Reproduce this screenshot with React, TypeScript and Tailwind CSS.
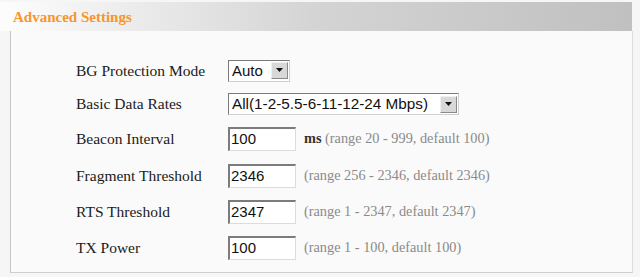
import React from "react";

const serif = { fontFamily: '"Liberation Serif", "Times New Roman", serif' };
const sans = { fontFamily: '"Liberation Sans", Arial, sans-serif' };

function Arrow() {
  return (
    <div className="flex h-[17px] w-[17px] items-center justify-center border border-t-[#f0f0f0] border-l-[#f0f0f0] border-r-[#8a8a8a] border-b-[#8a8a8a] bg-[#d8d8d8]">
      <svg width="8" height="5" viewBox="0 0 8 5">
        <path d="M0 0 H7 L3.5 4 Z" fill="#111" />
      </svg>
    </div>
  );
}

function Select({ value, width, size }: { value: string; width: string; size: string }) {
  return (
    <div
      className={`flex h-[22px] ${width} items-center justify-between border border-t-[#7a7a7a] border-l-[#7a7a7a] border-r-[#d0d0d0] border-b-[#d0d0d0] bg-white pl-[3px] pr-[1px] ${size} text-[#111]`}
      style={sans}
    >
      <span className="leading-none">{value}</span>
      <Arrow />
    </div>
  );
}

function Input({ value }: { value: string }) {
  return (
    <div
      className="flex h-[24px] w-[68px] items-center border-t-2 border-l-2 border-r border-b border-t-[#7c7c7c] border-l-[#7c7c7c] border-r-[#dcdcdc] border-b-[#dcdcdc] bg-white pl-[1px] text-[15px] text-[#111]"
      style={sans}
    >
      {value}
    </div>
  );
}

function Row({ label, h, children }: { label: string; h: string; children: React.ReactNode }) {
  return (
    <div className={`flex ${h} items-center`}>
      <div className="w-[152px] text-[15.5px] text-[#1a1a1a]" style={serif}>
        {label}
      </div>
      <div className="flex items-center">{children}</div>
    </div>
  );
}

function Hint({ children, unit }: { children: React.ReactNode; unit?: string }) {
  return (
    <span className="ml-[8px] text-[14.3px] text-[#8a8a8a]" style={serif}>
      {unit && <span className="font-bold text-[#333]">{unit} </span>}
      {children}
    </span>
  );
}

export default function App() {
  return (
    <div className="h-[277px] w-[640px] overflow-hidden bg-[#f6f6f6]">
      <div className="pt-[2px]">
        <div className="flex h-[29px] w-[632px] items-center bg-gradient-to-r from-[#fdfdfd] via-[#d4d4d4] to-[#c0c0c0] pl-[13px] pt-[2px]">
          <span className="text-[15px] font-bold text-[#f7962a]" style={serif}>
            Advanced Settings
          </span>
        </div>
      </div>
      <div className="ml-[10px] h-[242px] w-[623px] border-l border-r border-b border-l-[#c4c4c4] border-r-[#dcdcdc] border-b-[#cfcfcf] bg-[#fafafa] pl-[65px] pt-[23px]">
        <Row label="BG Protection Mode" h="h-[33px]">
          <Select value="Auto" width="w-[62px]" size="text-[15px]" />
        </Row>
        <Row label="Basic Data Rates" h="h-[34px]">
          <Select value="All(1-2-5.5-6-11-12-24 Mbps)" width="w-[231px]" size="text-[15.3px]" />
        </Row>
        <Row label="Beacon Interval" h="h-[36px]">
          <Input value="100" />
          <Hint unit="ms">(range 20 - 999, default 100)</Hint>
        </Row>
        <Row label="Fragment Threshold" h="h-[37px]">
          <Input value="2346" />
          <Hint>(range 256 - 2346, default 2346)</Hint>
        </Row>
        <Row label="RTS Threshold" h="h-[36px]">
          <Input value="2347" />
          <Hint>(range 1 - 2347, default 2347)</Hint>
        </Row>
        <Row label="TX Power" h="h-[36px]">
          <Input value="100" />
          <Hint>(range 1 - 100, default 100)</Hint>
        </Row>
      </div>
    </div>
  );
}
